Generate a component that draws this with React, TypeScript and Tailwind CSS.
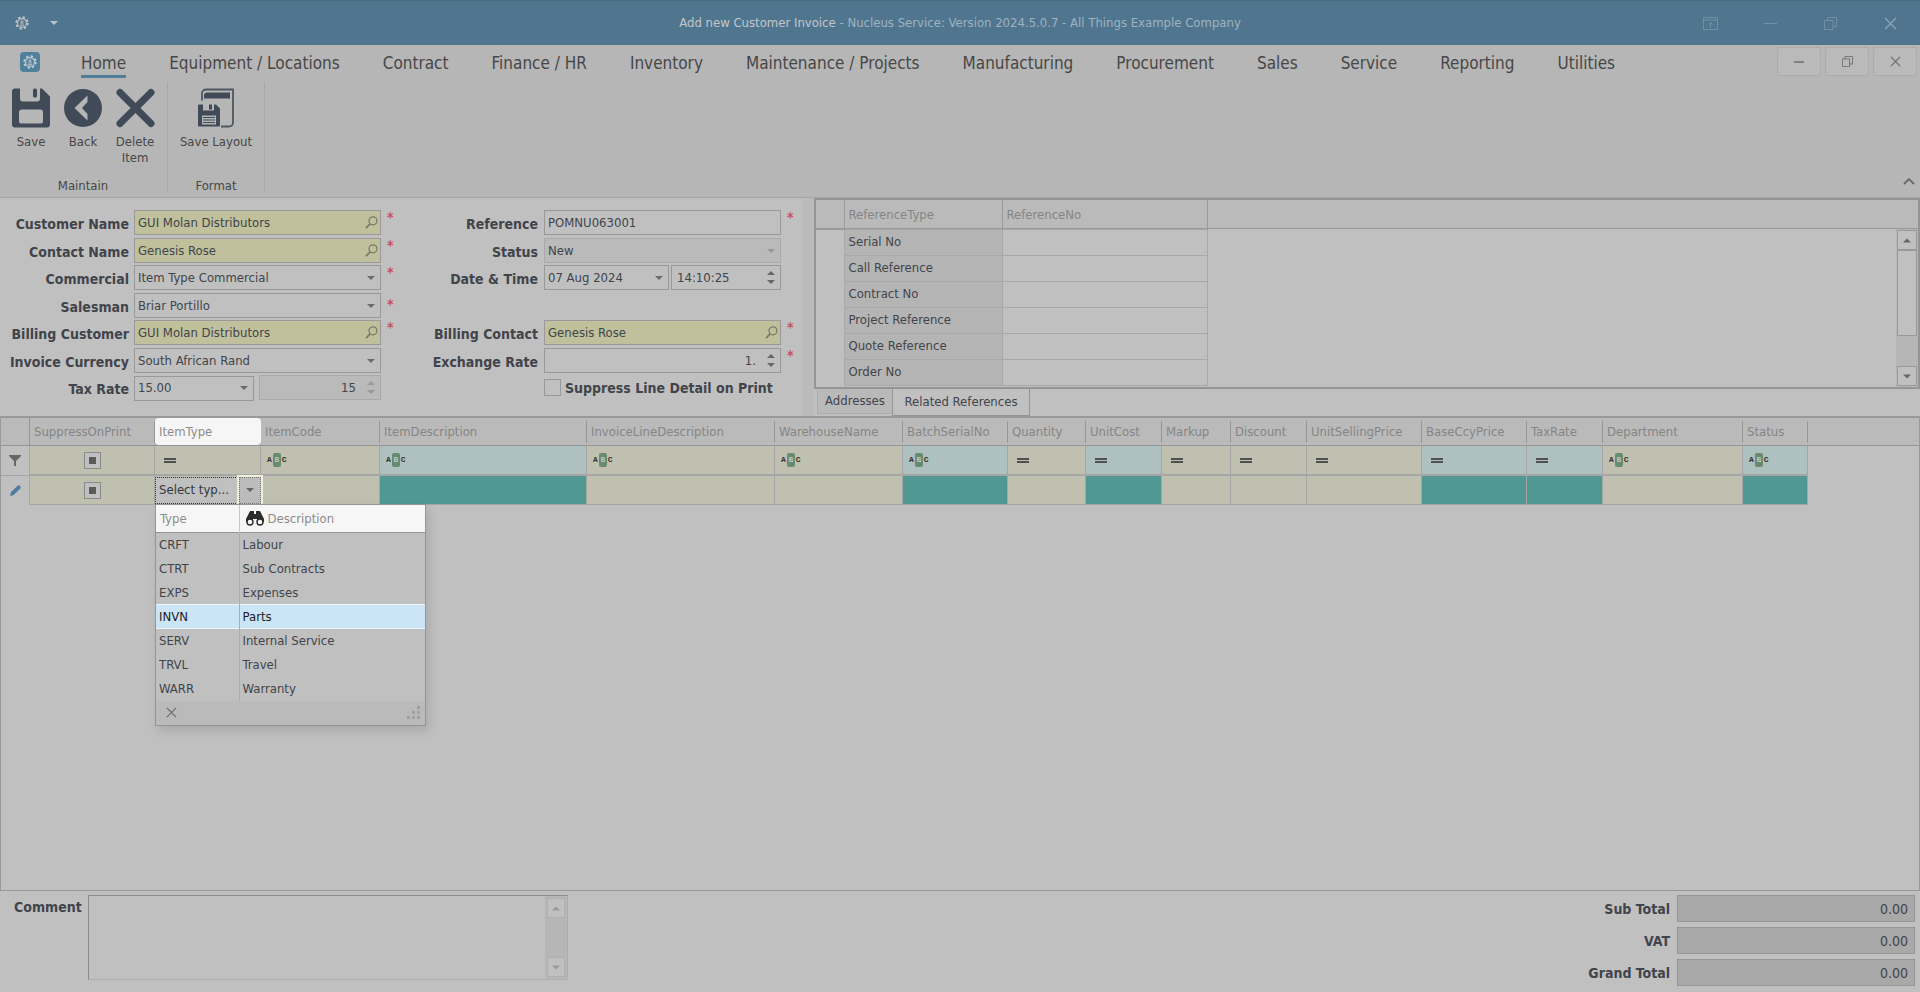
import { ReactNode } from "react";
import { clsx } from "clsx";

type Tone = "yellow" | "teal";

interface Column {
  name: string;
  width: string;
  tone: Tone;
  filter: "check" | "equals" | "text";
}

const MENU = [
  "Home",
  "Equipment / Locations",
  "Contract",
  "Finance / HR",
  "Inventory",
  "Maintenance / Projects",
  "Manufacturing",
  "Procurement",
  "Sales",
  "Service",
  "Reporting",
  "Utilities",
];

const REFERENCES = [
  "Serial No",
  "Call Reference",
  "Contract No",
  "Project Reference",
  "Quote Reference",
  "Order No",
];

const COLUMNS: Column[] = [
  { name: "SuppressOnPrint", width: "w-[125px]", tone: "yellow", filter: "check" },
  { name: "ItemType", width: "w-[106px]", tone: "yellow", filter: "equals" },
  { name: "ItemCode", width: "w-[119px]", tone: "yellow", filter: "text" },
  { name: "ItemDescription", width: "w-[207px]", tone: "teal", filter: "text" },
  { name: "InvoiceLineDescription", width: "w-[188px]", tone: "yellow", filter: "text" },
  { name: "WarehouseName", width: "w-[128px]", tone: "yellow", filter: "text" },
  { name: "BatchSerialNo", width: "w-[105px]", tone: "teal", filter: "text" },
  { name: "Quantity", width: "w-[78px]", tone: "yellow", filter: "equals" },
  { name: "UnitCost", width: "w-[76px]", tone: "teal", filter: "equals" },
  { name: "Markup", width: "w-[69px]", tone: "yellow", filter: "equals" },
  { name: "Discount", width: "w-[76px]", tone: "yellow", filter: "equals" },
  { name: "UnitSellingPrice", width: "w-[115px]", tone: "yellow", filter: "equals" },
  { name: "BaseCcyPrice", width: "w-[105px]", tone: "teal", filter: "equals" },
  { name: "TaxRate", width: "w-[76px]", tone: "teal", filter: "equals" },
  { name: "Department", width: "w-[140px]", tone: "yellow", filter: "text" },
  { name: "Status", width: "w-[65px]", tone: "teal", filter: "text" },
];

const ITEM_TYPES = [
  { type: "CRFT", description: "Labour" },
  { type: "CTRT", description: "Sub Contracts" },
  { type: "EXPS", description: "Expenses" },
  { type: "INVN", description: "Parts" },
  { type: "SERV", description: "Internal Service" },
  { type: "TRVL", description: "Travel" },
  { type: "WARR", description: "Warranty" },
];

function Caret({ className }: { className?: string }) {
  return (
    <svg viewBox="0 0 8 4" className={clsx("h-1 w-2 fill-current", className)}>
      <path d="M0 0h8L4 4z" />
    </svg>
  );
}

function GearMark({ className }: { className?: string }) {
  return (
    <svg viewBox="0 0 24 24" fill="none" stroke="currentColor" className={className}>
      <circle cx="12" cy="12" r="10" strokeWidth="3" strokeDasharray="4 3.85" />
      <circle cx="12" cy="12" r="7.6" strokeWidth="2" />
      <circle cx="12" cy="10" r="1.8" strokeWidth="1.6" />
      <path d="M10.6 12l-1 4.4h4.8l-1-4.4" strokeWidth="1.4" />
    </svg>
  );
}

function SearchGlyph() {
  return (
    <svg viewBox="0 0 14 14" fill="none" stroke="currentColor" className="size-[13px]">
      <circle cx="8.6" cy="5.2" r="4.3" strokeWidth="1.3" />
      <path d="M5.6 8.4L1 13" strokeWidth="1.8" />
    </svg>
  );
}

function CloseGlyph({ className }: { className?: string }) {
  return (
    <svg viewBox="0 0 12 12" fill="none" stroke="currentColor" className={className}>
      <path d="M1 1l10 10M11 1L1 11" strokeWidth="1.3" />
    </svg>
  );
}

function RestoreGlyph({ className }: { className?: string }) {
  return (
    <svg viewBox="0 0 13 13" fill="none" stroke="currentColor" className={className}>
      <path d="M.5 3.5H9v9H.5zM3.5 3.5v-3h9v9H9" />
    </svg>
  );
}

function TitleBar() {
  return (
    <header className="flex h-[45px] shrink-0 items-center border-t border-[#48697e] bg-[#50768f] text-[13px] text-[#c0c4c8]">
      <div className="flex flex-1 items-center gap-[17px]">
        <GearMark className="ml-[15px] size-[14px]" />
        <button aria-label="Customize toolbar" className="flex size-4 items-center justify-center">
          <Caret />
        </button>
      </div>
      <h1 className="text-[#9fb2bf]">
        <span className="text-[#c3c6c9]">Add new Customer Invoice</span> - Nucleus Service: Version
        2024.5.0.7 - All Things Example Company
      </h1>
      <div className="flex flex-1 justify-end text-[#7091a5]">
        <button aria-label="Ribbon display" className="flex h-11 w-[60px] items-center justify-center">
          <svg viewBox="0 0 15 13" fill="none" stroke="currentColor" className="h-[13px] w-[15px]">
            <path d="M.5.5h14v12H.5zM.5 3h14M7.5 11V5.5M5.5 7.5l2-2 2 2" />
          </svg>
        </button>
        <button aria-label="Minimize" className="flex h-11 w-[60px] items-center justify-center">
          <span className="h-px w-[13px] bg-current" />
        </button>
        <button aria-label="Restore" className="flex h-11 w-[60px] items-center justify-center">
          <RestoreGlyph className="size-[13px]" />
        </button>
        <button aria-label="Close" className="flex h-11 w-[60px] items-center justify-center text-[#8aa4b4]">
          <CloseGlyph className="size-[13px]" />
        </button>
      </div>
    </header>
  );
}

function WindowButton({ label, children }: { label: string; children: ReactNode }) {
  return (
    <button
      aria-label={label}
      className="flex h-[29px] w-11 items-center justify-center rounded-xs border border-[#adadad] bg-[#bababa] text-[#6a6a6a]"
    >
      {children}
    </button>
  );
}

function MenuBar() {
  return (
    <nav className="flex h-[37px] items-start pr-[3px] pl-5">
      <a
        href="#app"
        aria-label="Application menu"
        className="mt-[7px] flex h-5 w-5 items-center justify-center rounded-sm bg-[#50809c] text-[#c4ccd2]"
      >
        <GearMark className="size-[14px]" />
      </a>
      <ul className="ml-[41px] flex gap-[43px] pt-1.5 text-[17px] leading-6 text-[#474747]">
        {MENU.map((item, i) => (
          <li key={item}>
            <a
              href="#menu"
              className={clsx("block h-[27px] whitespace-nowrap", i === 0 && "border-b-3 border-[#507d99]")}
            >
              {item}
            </a>
          </li>
        ))}
      </ul>
      <div className="mt-0.5 ml-auto flex gap-1">
        <WindowButton label="Minimize child">
          <span className="h-0.5 w-2.5 bg-[#808080]" />
        </WindowButton>
        <WindowButton label="Restore child">
          <RestoreGlyph className="size-[11px]" />
        </WindowButton>
        <WindowButton label="Close child">
          <CloseGlyph className="size-[11px]" />
        </WindowButton>
      </div>
    </nav>
  );
}

function RibbonButton({ label, wide, children }: { label: string; wide?: boolean; children: ReactNode }) {
  return (
    <button className={clsx("flex flex-col items-center gap-1.5", wide ? "w-[90px]" : "w-[52px]")}>
      {children}
      <span className="px-1 leading-4">{label}</span>
    </button>
  );
}

function Ribbon() {
  return (
    <section className="flex h-[116px] border-b border-[#a6a6a6] text-[13px] text-[#474747]">
      <div className="mb-1.5 flex flex-col justify-between border-r border-[#a8a8a8] pr-1.5 pl-[5px]">
        <div className="flex items-start pt-1.5">
          <RibbonButton label="Save">
            <svg viewBox="0 0 38 39" className="h-10 w-[38px] fill-[#414b57]">
              <path
                fillRule="evenodd"
                d="M3 0h5v10a3 3 0 0 0 3 3h14a3 3 0 0 0 3-3V0h2l8 8v28a3 3 0 0 1-3 3H3a3 3 0 0 1-3-3V3a3 3 0 0 1 3-3zM10 21a3 3 0 0 0-3 3v9a2 2 0 0 0 2 2h20a2 2 0 0 0 2-2v-9a3 3 0 0 0-3-3z"
              />
              <rect x="21" y="0" width="4" height="9" rx="1.5" />
            </svg>
          </RibbonButton>
          <RibbonButton label="Back">
            <svg viewBox="0 0 38 39" className="h-10 w-[38px]">
              <circle cx="19" cy="19.5" r="19" fill="#414b57" />
              <path d="M23.5 7v6.5l-5.5 6 5.5 6V32l-13-12.5z" fill="#b6b6b6" />
            </svg>
          </RibbonButton>
          <RibbonButton label="Delete Item">
            <svg viewBox="0 0 39 39" className="h-10 w-[39px]">
              <path d="M4 4l31 31M35 4L4 35" stroke="#414b57" strokeWidth="7" strokeLinecap="round" />
            </svg>
          </RibbonButton>
        </div>
        <h2 className="text-center leading-2.5">Maintain</h2>
      </div>
      <div className="mb-1.5 flex flex-col justify-between border-r border-[#a8a8a8] px-[3px]">
        <div className="pt-1.5">
          <RibbonButton label="Save Layout" wide>
            <svg viewBox="-1 0 38 39" className="h-10 w-[38px]">
              <path
                d="M4 12V5a4 4 0 0 1 4-4h27v33a4 4 0 0 1-4 4h-8"
                fill="none"
                stroke="#4d5661"
                strokeWidth="1.8"
              />
              <path d="M6 10V7a3 3 0 0 1 3-3h23v6z" fill="#414b57" />
              <path
                fillRule="evenodd"
                d="M1 16h4v6h11v-6h2l4 4v17a1 1 0 0 1-1 1H1a1 1 0 0 1-1-1V17a1 1 0 0 1 1-1zM4 27v9h14v-9z"
                fill="#414b57"
              />
              <rect x="11" y="16" width="3" height="5" fill="#414b57" />
              <path d="M5 29h12M5 31.5h12M5 34h12" stroke="#414b57" strokeWidth="1.2" />
            </svg>
          </RibbonButton>
        </div>
        <h2 className="text-center leading-2.5">Format</h2>
      </div>
      <button aria-label="Collapse ribbon" className="mr-[5px] mb-3 ml-auto self-end text-[#666]">
        <svg viewBox="0 0 12 7" fill="none" stroke="currentColor" className="h-[7px] w-3">
          <path d="M1 6l5-4.8L11 6" strokeWidth="1.8" />
        </svg>
      </button>
    </section>
  );
}

interface RowProps {
  id: string;
  label: string;
  side: "left" | "right";
  required?: boolean;
  low?: boolean;
  children: ReactNode;
}

function Row({ id, label, side, required, low, children }: RowProps) {
  return (
    <div className="flex items-start">
      <label
        htmlFor={id}
        className={clsx(
          "shrink-0 pt-1 text-right text-sm leading-5 font-bold whitespace-nowrap text-[#41444a]",
          side === "left" ? "mr-[5px] w-[129px]" : "mr-1.5 w-[138px]",
        )}
      >
        {label}
      </label>
      <div className={clsx("flex", side === "left" ? "w-[247px]" : "w-[237px]")}>{children}</div>
      {required && (
        <span className={clsx("ml-1.5 text-sm leading-3.5 font-bold text-[#c4505a]", low && "mt-1")}>*</span>
      )}
    </div>
  );
}

const FIELD = "h-[25px] w-full min-w-0 appearance-none border px-[3px] text-[13px] text-[#41444a]";

function LookupField({ id, value }: { id: string; value: string }) {
  return (
    <div className="relative w-full">
      <input id={id} defaultValue={value} className={clsx(FIELD, "border-[#999] bg-[#c0c09c]")} />
      <button type="button" aria-label="Look up" className="absolute top-1.5 right-[3px] text-[#77776a]">
        <SearchGlyph />
      </button>
    </div>
  );
}

function SelectField({ id, value, disabled }: { id: string; value: string; disabled?: boolean }) {
  return (
    <div className="relative w-full">
      <select
        id={id}
        disabled={disabled}
        className={clsx(FIELD, "opacity-100", disabled ? "border-[#aaa] bg-[#bababa]" : "border-[#999] bg-[#c0c0c0]")}
      >
        <option>{value}</option>
      </select>
      <Caret
        className={clsx("pointer-events-none absolute top-[11px] right-1.5", disabled ? "text-[#999]" : "text-[#6a6a6a]")}
      />
    </div>
  );
}

interface SpinFieldProps {
  id: string;
  value: string;
  label?: string;
  disabled?: boolean;
  right?: boolean;
}

function SpinField({ id, value, label, disabled, right }: SpinFieldProps) {
  return (
    <div className="relative w-full">
      <input
        id={id}
        aria-label={label}
        defaultValue={value}
        disabled={disabled}
        className={clsx(
          FIELD,
          right ? "pr-6 text-right" : "pl-[5px]",
          disabled ? "border-[#aaa] bg-[#bababa]" : "border-[#999] bg-[#c0c0c0]",
        )}
      />
      <div
        className={clsx(
          "absolute top-1 right-1.5 flex h-[17px] flex-col justify-between",
          disabled ? "text-[#999]" : "text-[#666]",
        )}
      >
        <button type="button" aria-label="Increase" className="py-0.5">
          <Caret className="block rotate-180" />
        </button>
        <button type="button" aria-label="Decrease" className="py-0.5">
          <Caret className="block" />
        </button>
      </div>
    </div>
  );
}

function InvoiceForm() {
  return (
    <form className="flex w-[802px] shrink-0 bg-[#c0c0c0] pt-3">
      <div className="grid h-[193px] w-[400px] grid-rows-7">
        <Row id="customer" label="Customer Name" side="left" required>
          <LookupField id="customer" value="GUI Molan Distributors" />
        </Row>
        <Row id="contact" label="Contact Name" side="left" required>
          <LookupField id="contact" value="Genesis Rose" />
        </Row>
        <Row id="commercial" label="Commercial" side="left" required>
          <SelectField id="commercial" value="Item Type Commercial" />
        </Row>
        <Row id="salesman" label="Salesman" side="left" required low>
          <SelectField id="salesman" value="Briar Portillo" />
        </Row>
        <Row id="billing" label="Billing Customer" side="left" required>
          <LookupField id="billing" value="GUI Molan Distributors" />
        </Row>
        <Row id="currency" label="Invoice Currency" side="left">
          <SelectField id="currency" value="South African Rand" />
        </Row>
        <Row id="tax" label="Tax Rate" side="left">
          <div className="grid w-full grid-cols-[120px_1fr] gap-[5px]">
            <SelectField id="tax" value="15.00" />
            <SpinField id="tax-percent" label="Tax percent" value="15" disabled right />
          </div>
        </Row>
      </div>
      <div className="grid h-[193px] grid-rows-7">
        <Row id="reference" label="Reference" side="right" required>
          <input id="reference" defaultValue="POMNU063001" className={clsx(FIELD, "border-[#999] bg-[#c0c0c0]")} />
        </Row>
        <Row id="status" label="Status" side="right">
          <SelectField id="status" value="New" disabled />
        </Row>
        <Row id="date" label="Date & Time" side="right">
          <div className="grid w-full grid-cols-[125px_1fr] gap-0.5">
            <SelectField id="date" value="07 Aug 2024" />
            <SpinField id="time" label="Time" value="14:10:25" />
          </div>
        </Row>
        <div />
        <Row id="billing-contact" label="Billing Contact" side="right" required>
          <LookupField id="billing-contact" value="Genesis Rose" />
        </Row>
        <Row id="exchange" label="Exchange Rate" side="right" required>
          <SpinField id="exchange" value="1." right />
        </Row>
        <label className="flex h-[25px] items-center gap-1 pl-36 text-sm leading-5 font-bold text-[#41444a]">
          <input type="checkbox" className="size-[17px] appearance-none border border-[#999]" />
          Suppress Line Detail on Print
        </label>
      </div>
    </form>
  );
}

function ScrollButton({ up, className }: { up?: boolean; className: string }) {
  return (
    <button
      aria-label={up ? "Scroll up" : "Scroll down"}
      className={clsx("flex h-5 items-center justify-center border bg-[#c0c0c0]", className)}
    >
      <Caret className={clsx("h-[5px]", up && "rotate-180")} />
    </button>
  );
}

function ReferencePanel() {
  return (
    <section className="ml-3 min-w-0 flex-1 bg-[#c0c0c0]">
      <div className="flex h-[191px] overflow-hidden border-2 border-[#959595]">
        <div className="relative min-w-0 flex-1">
          <div className="h-[29px] border-b border-[#999] bg-[#bababa]" />
          <table className="absolute top-0 left-0 w-[392px] table-fixed border-collapse text-left text-[13px]">
            <thead className="text-[#858585]">
              <tr className="h-[29px] border-b border-[#999]">
                <td className="w-7 border-r border-[#999]" />
                <th className="w-[158px] border-r border-[#999] px-1 font-normal">ReferenceType</th>
                <th className="border-r border-[#999] px-1 font-normal">ReferenceNo</th>
              </tr>
            </thead>
            <tbody className="text-[#41444a]">
              {REFERENCES.map((name) => (
                <tr key={name} className="h-[26px]">
                  <td className="border-r border-[#aaa]" />
                  <td className="border border-[#a8a8a8] bg-[#b4b4b4] px-1">{name}</td>
                  <td className="border border-[#a8a8a8]" />
                </tr>
              ))}
            </tbody>
          </table>
        </div>
        <div className="flex w-[22px] flex-col">
          <div className="h-[29px] shrink-0 border-b border-[#999] bg-[#bababa]" />
          <div className="flex flex-1 flex-col bg-[#b6b6b6] px-px py-px">
            <ScrollButton up className="border-[#999] text-[#666]" />
            <div className="h-[86px] border border-[#999] bg-[#c0c0c0]" />
            <ScrollButton className="mt-auto border-[#999] text-[#666]" />
          </div>
        </div>
      </div>
      <div role="tablist" className="flex items-start pl-[3px] text-[13px] text-[#41444a]">
        <button role="tab" className="h-[25px] w-[75px] border-b border-l border-[#adadad] bg-[#b9b9b9]">
          Addresses
        </button>
        <button
          role="tab"
          aria-selected="true"
          className="h-[27px] w-[138px] border-x border-b border-[#959595] bg-[#c0c0c0]"
        >
          Related References
        </button>
      </div>
    </section>
  );
}

function MixedBox({ label }: { label: string }) {
  return (
    <input
      type="checkbox"
      aria-label={label}
      className="mx-auto block size-[17px] appearance-none border border-[#8a8a8a] bg-[#5a5a5a] ring-4 ring-[#c0c0c0] ring-inset"
    />
  );
}

function FilterGlyph({ kind }: { kind: Column["filter"] }) {
  if (kind === "check") return <MixedBox label="Filter SuppressOnPrint" />;
  if (kind === "equals")
    return (
      <svg viewBox="0 0 12 5" className="ml-[9px] h-[5px] w-3 fill-[#505050]">
        <path d="M0 0h12v2H0zM0 3h12v2H0z" />
      </svg>
    );
  return (
    <span className="ml-1.5 flex h-[14px] items-center gap-px font-['Liberation_Mono',monospace] text-[8px] leading-[14px] font-bold text-[#333]">
      A<span className="w-2 rounded-xs bg-[#668a72] text-center text-[#b6c8bc]">B</span>C
    </span>
  );
}

function Binoculars() {
  return (
    <svg viewBox="0 0 18 16" className="h-4 w-[18px]">
      <path d="M4 1h4v3h2V1h4l4 8v3h-7V9H7v3H0V9z" fill="#2b2b2b" />
      <circle cx="4" cy="12" r="3" fill="#f6f6f6" stroke="#2b2b2b" strokeWidth="1.4" />
      <circle cx="14" cy="12" r="3" fill="#f6f6f6" stroke="#2b2b2b" strokeWidth="1.4" />
    </svg>
  );
}

function TypeDropdown() {
  return (
    <div className="absolute top-full left-0 z-10 w-[271px] border border-[#959595] bg-[#c0c0c0] shadow-[3px_5px_10px_rgba(0,0,0,0.12)]">
      <table className="w-full table-fixed border-collapse text-left text-[13px] text-[#41444a]">
        <thead>
          <tr className="h-7 border-b border-[#959595] bg-[#f6f6f6] text-[#8c8c8c]">
            <th className="w-[83px] border-r border-[#c8c8c8] px-1 font-normal">Type</th>
            <th className="px-1.5 font-normal">
              <span className="flex items-center gap-1">
                <Binoculars />
                Description
              </span>
            </th>
          </tr>
        </thead>
        <tbody>
          {ITEM_TYPES.map((item) => (
            <tr
              key={item.type}
              className={clsx(
                "h-6",
                item.type === "INVN" && "border-y border-[#eef6fc] bg-[#cbe4f6] text-[#1a1e24]",
              )}
            >
              <td className="border-r border-[#adadad] px-[3px]">{item.type}</td>
              <td className="px-[3px]">{item.description}</td>
            </tr>
          ))}
        </tbody>
      </table>
      <div className="flex h-6 items-center justify-between bg-[#bababa] pr-[5px] pl-2.5 text-[#6a6a6a]">
        <button aria-label="Close list">
          <CloseGlyph className="size-[11px]" />
        </button>
        <svg viewBox="0 0 13 13" className="size-[13px] fill-[#a0a0a0]">
          <path d="M10 0h3v3h-3zM5 5h3v3H5zM10 5h3v3h-3zM0 10h3v3H0zM5 10h3v3H5zM10 10h3v3h-3z" />
        </svg>
      </div>
    </div>
  );
}

function ItemTypeCell() {
  return (
    <div className="relative">
      <div className="relative h-[27px] border border-dotted border-[#333] bg-[#c0c0c0]">
        <select aria-label="Item type" className="h-full w-full appearance-none pl-[3px] text-[13px] text-[#35383c]">
          <option>Select typ...</option>
        </select>
        <span className="pointer-events-none absolute -top-[3px] -right-1 -bottom-px flex w-[26px] border-2 border-b-0 border-[#f0f0dc]">
          <span className="flex flex-1 items-center justify-center border border-dotted border-[#777] bg-[#bcbcbc] text-[#666]">
            <Caret />
          </span>
        </span>
      </div>
      <TypeDropdown />
    </div>
  );
}

function LinesGrid() {
  return (
    <section className="min-h-0 flex-1 border border-t-2 border-[#999] bg-[#c0c0c0]">
      <div className="h-7 border-b border-[#959595] bg-[#bababa]" />
      <table className="-mt-7 w-[1807px] table-fixed border-separate border-spacing-0 text-left text-[13px]">
        <thead className="text-[#858585]">
          <tr className="h-7">
            <td className="w-[29px] border-r border-b border-[#959595]" />
            {COLUMNS.map((col) => (
              <th
                key={col.name}
                className={clsx(
                  "border-b border-[#959595] font-normal",
                  col.width,
                  col.name === "ItemType" && "rounded-sm bg-[#f6f6f6] text-[#8c8c8c]",
                )}
              >
                <span
                  className={clsx(
                    "block h-[22px] border-r pl-1 leading-[22px]",
                    col.name === "ItemType" ? "border-transparent" : "border-[#959595]",
                  )}
                >
                  {col.name}
                </span>
              </th>
            ))}
          </tr>
        </thead>
        <tbody>
          <tr className="h-[30px]">
            <td className="border-r border-b border-[#a6a6a6]">
              <svg viewBox="0 0 12 11" className="mx-auto h-[11px] w-3 fill-[#666]">
                <path d="M0 0h12v1L7 6v5H5V6L0 1z" />
              </svg>
            </td>
            {COLUMNS.map((col) => (
              <td
                key={col.name}
                className={clsx(
                  "border-r border-b-2 border-[#a6a6a6]",
                  col.tone === "teal" ? "bg-[#aec0c0]" : "bg-[#bfc0af]",
                )}
              >
                <FilterGlyph kind={col.filter} />
              </td>
            ))}
          </tr>
          <tr className="h-[29px]">
            <td className="border-r border-[#a6a6a6]">
              <svg viewBox="0 0 12 12" className="mx-auto size-[11px] fill-[#4d7d9c]">
                <path d="M0 12l1-4 7-7a2 2 0 0 1 3 3l-7 7z" />
              </svg>
            </td>
            {COLUMNS.map((col) => (
              <td
                key={col.name}
                className={clsx(
                  "border-r border-b border-[#a6a6a6] p-0",
                  col.tone === "teal" ? "bg-[#519893]" : "bg-[#bfc0af]",
                )}
              >
                {col.name === "SuppressOnPrint" && <MixedBox label="Suppress on print" />}
                {col.name === "ItemType" && <ItemTypeCell />}
              </td>
            ))}
          </tr>
        </tbody>
      </table>
    </section>
  );
}

function Footer() {
  return (
    <footer className="flex h-[101px] shrink-0 items-start justify-between bg-[#c0c0c0] pt-1 pr-[5px] pl-3.5 text-[#41444a]">
      <div className="flex items-start gap-1.5">
        <label htmlFor="comment" className="pt-0.5 text-sm leading-5 font-bold">
          Comment
        </label>
        <div className="flex h-[85px] w-[480px] border border-[#adadad] border-t-[#8c8c8c] border-l-[#8c8c8c]">
          <textarea id="comment" className="min-w-0 flex-1 resize-none" />
          <div className="flex w-[22px] flex-col justify-between bg-[#b6b6b6] p-0.5">
            <ScrollButton up className="border-[#b0b0b0] text-[#999]" />
            <ScrollButton className="border-[#b0b0b0] text-[#999]" />
          </div>
        </div>
      </div>
      <div className="flex flex-col gap-[5px]">
        {["Sub Total", "VAT", "Grand Total"].map((label) => (
          <label key={label} className="flex items-center justify-end gap-[7px] text-sm font-bold">
            {label}
            <input
              readOnly
              value="0.00"
              className="h-[27px] w-[238px] border border-[#959595] bg-[#a9a9a9] px-1.5 text-right text-sm font-normal"
            />
          </label>
        ))}
      </div>
    </footer>
  );
}

export default function App() {
  return (
    <div className="flex h-screen min-w-[1200px] flex-col overflow-hidden bg-[#b6b6b6] font-['DejaVu_Sans_Condensed',Tahoma,sans-serif]">
      <TitleBar />
      <MenuBar />
      <Ribbon />
      <main className="flex min-h-0 flex-1 flex-col">
        <div className="flex h-[218px] shrink-0 bg-[#bbbbbb]">
          <InvoiceForm />
          <ReferencePanel />
        </div>
        <LinesGrid />
      </main>
      <Footer />
    </div>
  );
}
